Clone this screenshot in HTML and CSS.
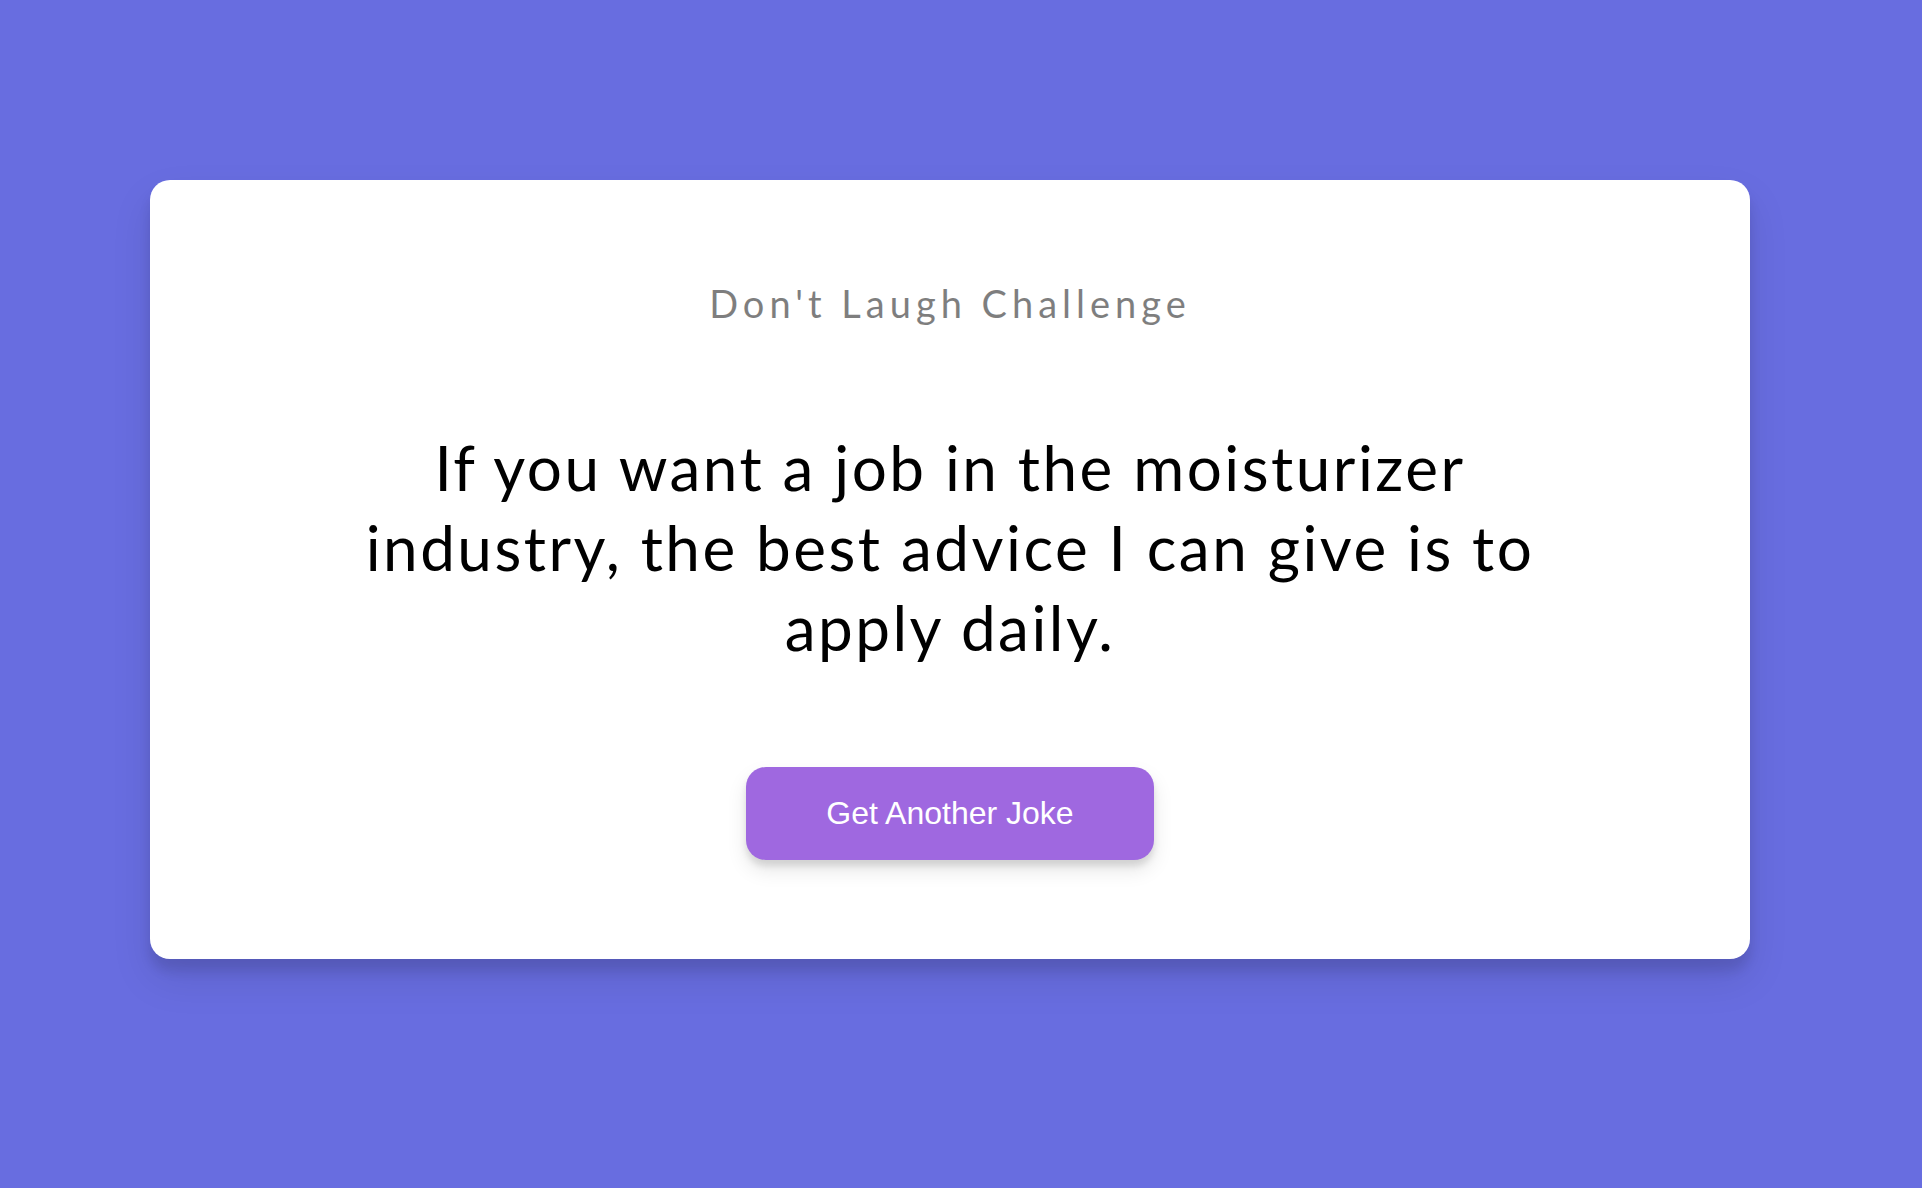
FILE: index.html
```html
<!DOCTYPE html>
<html lang="en">
<head>
<meta charset="UTF-8">
<title>Dad Jokes</title>
<link rel="stylesheet" href="styles.css">
</head>
<body>
<div class="page">
  <div class="card">
    <h3 class="title">Don't Laugh Challenge</h3>
    <div class="joke">If you want a job in the moisturizer industry, the best advice I can give is to apply daily.</div>
    <button class="btn">Get Another Joke</button>
  </div>
</div>
</body>
</html>
```

FILE: styles.css
```css
* { box-sizing: border-box; }
html, body {
  margin: 0;
  padding: 0;
  height: 100%;
}
body {
  background-color: #686de0;
  font-family: Lato, "Noto Sans", sans-serif;
  overflow: hidden;
}
.page {
  display: flex;
  justify-content: flex-start;
  align-items: flex-start;
  padding: 180px 0 0 150px;
}
.card {
  background-color: #fff;
  border-radius: 20px;
  box-shadow: 0 20px 40px rgba(0, 0, 0, 0.1), 0 12px 12px rgba(0, 0, 0, 0.1);
  padding: 100px 40px;
  text-align: center;
  width: 1600px;
  height: 779px;
}
.title {
  margin: 0;
  font-size: 38px;
  line-height: 47px;
  font-weight: 400;
  letter-spacing: 5px;
  color: #000;
  opacity: 0.5;
}
.joke {
  font-size: 62px;
  letter-spacing: 2.5px;
  line-height: 80px;
  margin: 100px auto;
  max-width: 1200px;
  color: #000;
}
.btn {
  background-color: #9f68e0;
  color: #fff;
  border: 0;
  border-radius: 20px;
  box-shadow: 0 10px 20px rgba(0, 0, 0, 0.1), 0 6px 6px rgba(0, 0, 0, 0.1);
  padding: 29px 80px 29px;
  font-family: "Liberation Sans", Arial, sans-serif;
  font-size: 32px;
  line-height: 35px;
}
```
